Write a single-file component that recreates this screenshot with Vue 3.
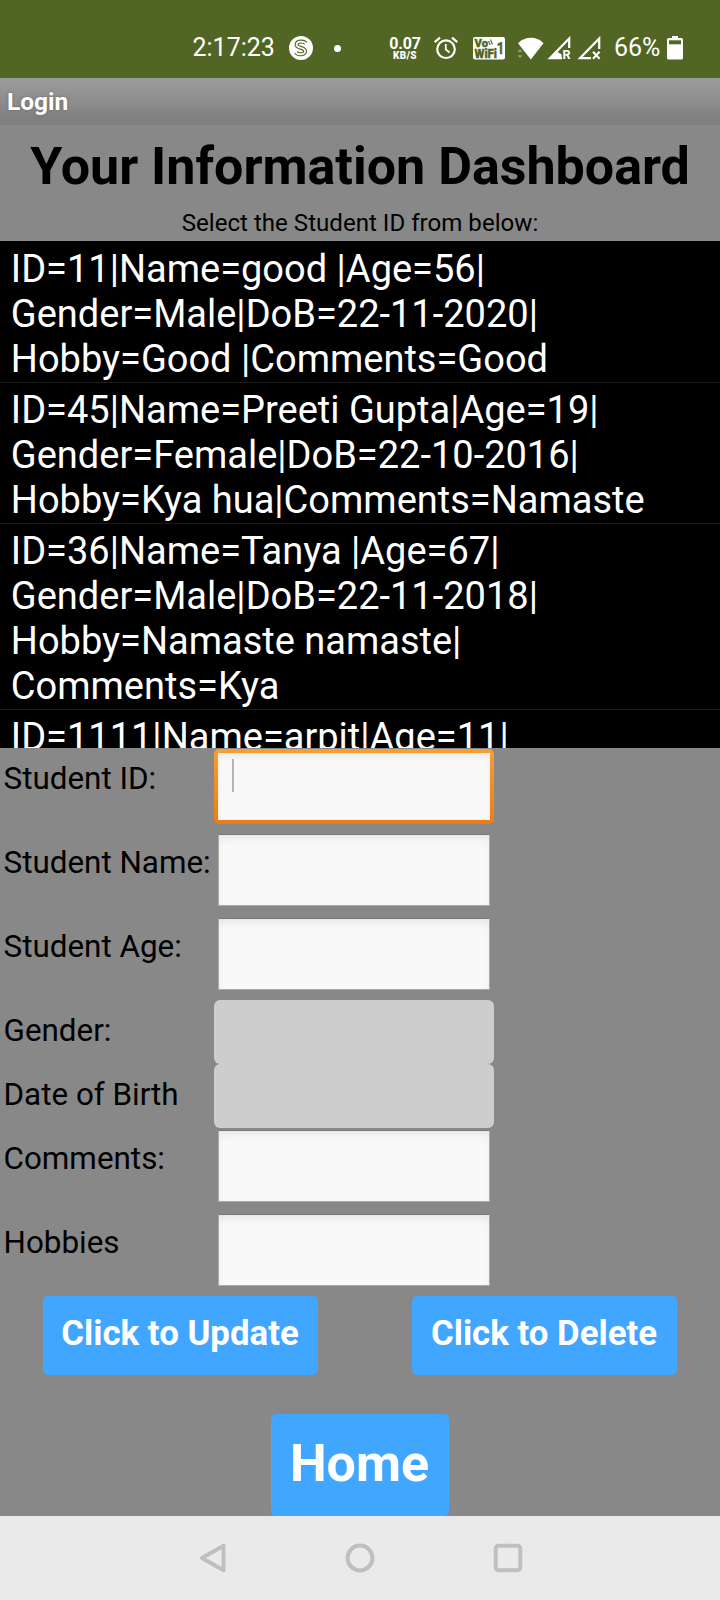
<script setup>
const records = [
  ['ID=11|Name=good |Age=56|', 'Gender=Male|DoB=22-11-2020|', 'Hobby=Good |Comments=Good'],
  ['ID=45|Name=Preeti Gupta|Age=19|', 'Gender=Female|DoB=22-10-2016|', 'Hobby=Kya hua|Comments=Namaste'],
  ['ID=36|Name=Tanya |Age=67|', 'Gender=Male|DoB=22-11-2018|', 'Hobby=Namaste namaste|', 'Comments=Kya'],
  ['ID=1111|Name=arpit|Age=11|'],
]
const fields = [
  { label: 'Student ID:', kind: 'focused' },
  { label: 'Student Name:', kind: 'text' },
  { label: 'Student Age:', kind: 'text' },
  { label: 'Gender:', kind: 'picker' },
  { label: 'Date of Birth', kind: 'picker' },
  { label: 'Comments:', kind: 'text' },
  { label: 'Hobbies', kind: 'text' },
]
</script>

<template>
  <div class="screen">
    <header class="status">
      <span class="clock">2:17:23</span>
      <svg class="coin" width="24" height="24" viewBox="0 0 24 24">
        <circle cx="12" cy="12" r="12" fill="#fff" />
        <path d="M16.8 7.500C15 4.500 7.500 4.800 7.600 8.700C7.700 12.500 16.100 11 16.100 15.200C16 19 8.800 19.300 7 16.300" fill="none" stroke="#516624" stroke-width="4" />
        <path d="M17.500 8C15 4.500 7.500 4.800 7.600 8.700C7.700 12.500 16.100 11 16.100 15.200C16 19 8.800 19.300 6.400 15.900" fill="none" stroke="#fff" stroke-width="1.800" />
      </svg>
      <span class="dot"></span>
      <div class="rate"><b>0.07</b><small>KB/S</small></div>
      <svg class="alarm" width="26" height="24" viewBox="0 0 26 24" fill="none" stroke="#fff">
        <circle cx="13" cy="13.200" r="8.800" stroke-width="2.200" />
        <path d="M12.800 8v5.500l3.800 3" stroke-width="1.800" />
        <path d="M1.700 6.200L7 1.700M19 1.700l5.300 4.500" stroke-width="2.200" />
      </svg>
      <svg class="vowifi" width="32" height="23" viewBox="0 0 32 23">
        <rect width="32" height="22.500" rx="2" fill="#fff" />
        <g fill="#516624" stroke="#516624" stroke-width=".4" font-family="Roboto, sans-serif" font-weight="900">
          <text x="1.500" y="10" font-size="11.500" textLength="13.500" lengthAdjust="spacingAndGlyphs">Vo</text>
          <text x="1.500" y="20.800" font-size="12" textLength="22.500" lengthAdjust="spacingAndGlyphs">WiFi</text>
          <text x="23.800" y="17" font-size="17" font-weight="700" textLength="7.500" lengthAdjust="spacingAndGlyphs">1</text>
        </g>
        <path d="M15.500 4l1.800 4M17.500 2.500l2 5" stroke="#516624" stroke-width="1.100" />
      </svg>
      <svg class="wifi" width="27" height="24" viewBox="0 0 27 24">
        <path d="M1 6.200C8 -1.200 20 -1.200 26.500 6.200L13.800 22.500Z" fill="#fff" />
        <path d="M.4 15l2.600-2.800L5.600 15zM.4 18.200L3 21l2.600-2.800z" fill="#97a36d" />
      </svg>
      <svg class="signal" width="28" height="24" viewBox="0 0 28 24">
        <path d="M22.200 12V2.500L3 22.200h12" fill="none" stroke="#fff" stroke-width="2.200" />
        <path d="M2 23L9.500 15.200 14.500 18.500v4.500z" fill="#fff" />
        <text x="15.500" y="23" font-family="Roboto, sans-serif" font-weight="700" font-size="12.500" fill="#fff">R</text>
      </svg>
      <svg class="signal two" width="26" height="24" viewBox="0 0 26 24" fill="none" stroke="#fff">
        <path d="M22.200 13V2.500L3 22.200h11" stroke-width="2.200" />
        <path d="M16 15.800l6.600 7M22.600 15.800l-6.600 7" stroke-width="2" />
      </svg>
      <span class="percent">66%</span>
      <svg class="battery" width="16" height="24" viewBox="0 0 16 24">
        <path d="M5 0h6v2h3.500Q16 2 16 3.500V22q0 1.500-1.500 1.500h-13Q0 23.500 0 22V3.500Q0 2 1.500 2H5z" fill="#fff" />
        <rect x="2" y="4.300" width="12" height="4" fill="#516624" />
      </svg>
    </header>
    <div class="titlebar">Login</div>
    <main>
      <h1><span>Your Information Dashboard</span></h1>
      <p class="hint">Select the Student ID from below:</p>
      <section class="list">
        <article v-for="(r, i) in records" :key="i">
          <div v-for="line in r" :key="line">{{ line }}</div>
        </article>
      </section>
      <section class="form">
        <div v-for="f in fields" :key="f.label" class="field" :class="f.kind">
          <label>{{ f.label }}</label>
          <div class="control"><i v-if="f.kind === 'focused'"></i></div>
        </div>
      </section>
      <div class="actions">
        <button class="update">Click to Update</button>
        <button class="delete">Click to Delete</button>
      </div>
      <button class="home">Home</button>
    </main>
    <nav>
      <svg width="28" height="30" viewBox="0 0 28 30"><path d="M3 15L24.500 2.800V27.200Z" /></svg>
      <svg width="30" height="30" viewBox="0 0 30 30"><circle cx="15" cy="15" r="12.400" /></svg>
      <svg width="30" height="30" viewBox="0 0 30 30"><rect x="2.700" y="2.700" width="24.600" height="24.600" rx="3" /></svg>
    </nav>
  </div>
</template>

<style>
body { margin: 0; background: #888; }
</style>

<style scoped>
.screen { width: 720px; height: 1600px; overflow: hidden; display: flex; flex-direction: column; background: #888; font-family: Roboto, "Noto Sans", sans-serif; color: #000; }
.status { height: 78px; flex: none; box-sizing: border-box; background: #516624; color: #fff; display: flex; align-items: flex-start; }
.status > * { flex: none; }
.clock { margin: 33px 0 0 192.500px; width: 96.500px; font-size: 25px; line-height: 30px; white-space: nowrap; }
.coin { margin-top: 36px; }
.dot { width: 7px; height: 7px; border-radius: 50%; background: #fff; margin: 45px 0 0 21px; }
.rate { width: 32px; margin: 36px 0 0 48px; display: flex; flex-direction: column; align-items: center; }
.rate b { font-size: 16px; line-height: 15px; letter-spacing: -.2px; }
.rate small { font-size: 10px; line-height: 10px; font-weight: 900; letter-spacing: .3px; }
.alarm { margin: 36px 0 0 12px; }
.vowifi { margin: 37px 0 0 14px; }
.wifi { margin: 37px 0 0 12px; }
.signal { margin: 36px 0 0 3px; }
.signal.two { margin-left: 2px; }
.percent { margin: 33px 0 0 11px; width: 53px; font-size: 25px; line-height: 30px; }
.battery { margin-top: 36px; }
.titlebar { height: 47px; flex: none; box-sizing: border-box; padding: 10px 0 0 7px; background: linear-gradient(#9c9c9c, #8a8a8a 60%, #808080 82%, #808080); color: #fff; font-size: 24.500px; line-height: 28px; font-weight: 700; text-shadow: 0 0 3px #666; }
main { height: 1391px; flex: none; display: flex; flex-direction: column; }
h1 { margin: 11px 0 0; height: 62px; line-height: 62px; font-size: 52px; font-weight: 700; text-align: center; white-space: nowrap; }
.hint { margin: 10px 0 0; height: 33px; line-height: 30px; font-size: 24.100px; text-align: center; }
.list { height: 507px; flex: none; box-sizing: border-box; padding-top: 1px; overflow: hidden; background: #000; color: #fff; }
.list article { padding: 5.300px 0 .7px 10.800px; border-bottom: 1px solid #1c1c1c; font-size: 38px; line-height: 44.700px; white-space: pre; }
.field { height: 84px; display: flex; align-items: flex-start; }
.field.picker { height: 64px; }
.field label { width: 214px; padding: 12px 0 0 3.500px; box-sizing: border-box; font-size: 31.400px; line-height: 38px; white-space: nowrap; }
.control { box-sizing: border-box; width: 272px; height: 72px; margin: 2px 0 0 4px; border: 1px solid #aaa; border-top-color: #777; background: #f9f9f9; box-shadow: inset 0 5px 8px -2px #e4e4e4; }
.focused .control { width: 280px; height: 75px; margin: 1px 0 0; border: 0; border-radius: 5px; padding: 4px; background: linear-gradient(#f4a039, #ea7d17); box-shadow: none; display: flex; }
.focused .control::after { content: ""; flex: 1; background: #f9f9f9; box-shadow: inset 0 4px 7px -2px #e4e4e4, inset 0 0 0 1px #fff0dc; }
.control i { position: absolute; width: 2px; height: 33px; margin: 6px 0 0 14px; background: #b5b5b5; }
.picker .control { width: 280px; height: 64px; margin: 0; border: 0; border-radius: 6px; background: #cdcdcd; box-shadow: none; }
.actions { height: 118px; display: flex; }
button { border: 0; margin: 0; padding: 0; background: #40a6ff; color: #fff; border-radius: 5px; font-family: inherit; font-weight: 700; white-space: nowrap; }
.actions button { height: 79px; font-size: 34.800px; line-height: 42px; padding: 0 1px 6px 0; }
.update { width: 275px; margin-left: 43px; }
.delete { width: 265px; margin-left: 94px; }
.home { width: 178px; height: 102px; flex: none; align-self: center; font-size: 52px; padding: 0 1px 3px 0; }
nav { height: 84px; flex: none; background: #eaeaea; display: flex; justify-content: center; padding: 27px 0 0 2px; box-sizing: border-box; gap: 118px; }
nav svg { flex: none; fill: none; stroke: #bfbfbf; stroke-width: 4px; stroke-linejoin: round; }
</style>
